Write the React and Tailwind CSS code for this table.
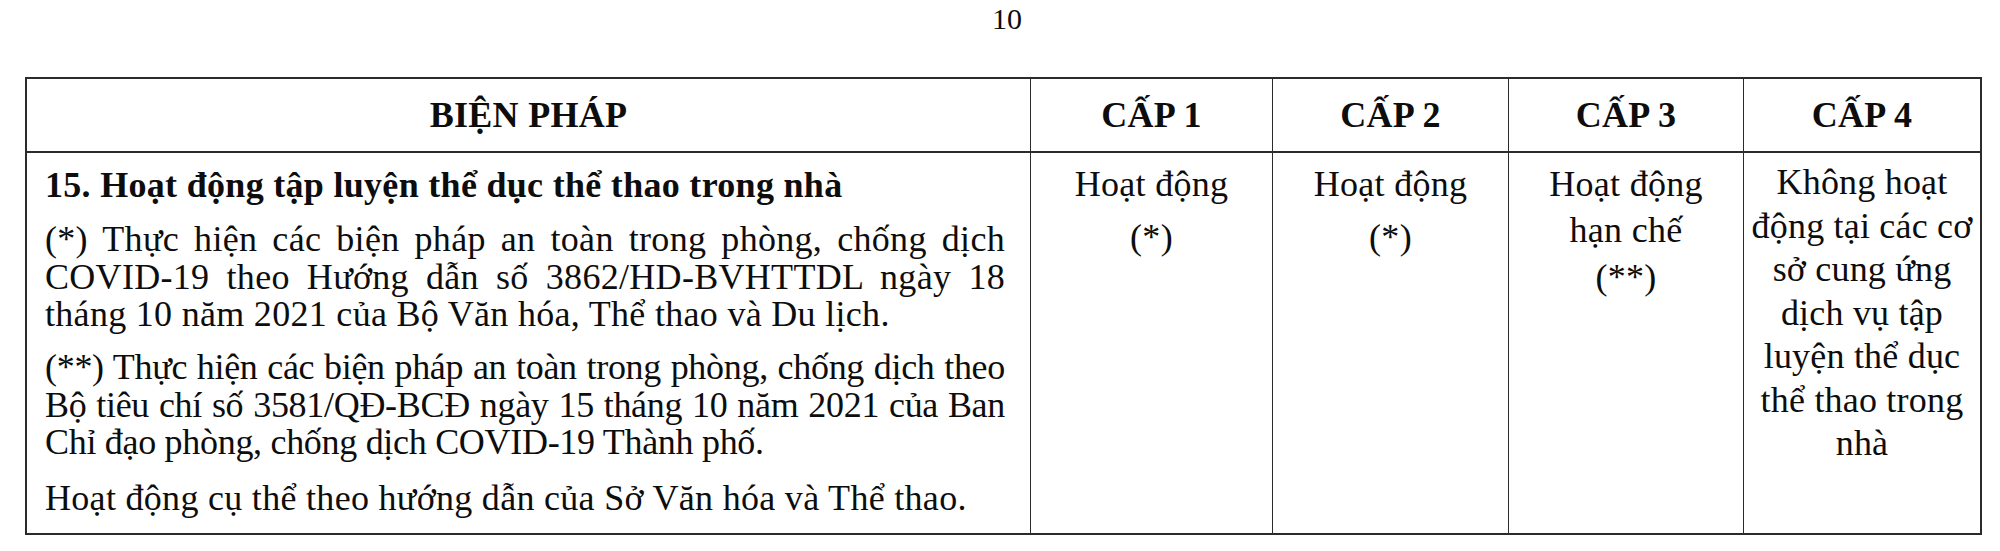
import React from 'react';

const p1 = [
    '(*) Thực hiện các biện pháp an toàn trong phòng, chống dịch',
    'COVID-19 theo Hướng dẫn số 3862/HD-BVHTTDL ngày 18',
    'tháng 10 năm 2021 của Bộ Văn hóa, Thể thao và Du lịch.',
];

const p2 = [
    '(**) Thực hiện các biện pháp an toàn trong phòng, chống dịch theo',
    'Bộ tiêu chí số 3581/QĐ-BCĐ ngày 15 tháng 10 năm 2021 của Ban',
    'Chỉ đạo phòng, chống dịch COVID-19 Thành phố.',
];

const levels = [
    { title: 'CẤP 1', lines: ['Hoạt động', '(*)'], cls: 'pt-[5px] leading-[53px]' },
    { title: 'CẤP 2', lines: ['Hoạt động', '(*)'], cls: 'pt-[5px] leading-[53px]' },
    { title: 'CẤP 3', lines: ['Hoạt động', 'hạn chế', '(**)'], cls: 'pt-[7.5px] leading-[46.5px]' },
];

const level4 = ['Không hoạt', 'động tại các cơ', 'sở cung ứng', 'dịch vụ tập', 'luyện thể dục', 'thể thao trong', 'nhà'];

// a paragraph whose lines break exactly where the scan breaks them
const Paragraph = ({ lines, tracking, className }) => (
    <div className={className}>
        {lines.map((line, i) => (
            <div
                key={i}
                className={
                    (i < lines.length - 1 ? 'text-justify [text-align-last:justify] ' : 'text-left ') +
                    'whitespace-nowrap ' + tracking
                }
            >
                {line}
            </div>
        ))}
    </div>
);

const App = () => {
    return (
        <div className="w-[2000px] h-[551px] bg-white text-[#0d0d0d] overflow-hidden font-['Liberation_Serif','Times_New_Roman',serif]">
            {/* số trang */}
            <div className="pt-[4px] pl-[14px] text-center text-[30px] leading-[30px]">10</div>

            {/* bảng */}
            <div className="mt-[43px] ml-[25px] w-[1957px] border-2 border-[#2b2b2b]">
                <div className="grid grid-cols-[1004px_242px_236px_235px_1fr] h-[74px] border-b-2 border-[#2b2b2b] text-[36px] font-bold tracking-[0.3px]">
                    <div className="flex items-center justify-center border-r-[1.5px] border-[#2b2b2b]">BIỆN PHÁP</div>
                    {levels.map(level => (
                        <div key={level.title} className="flex items-center justify-center border-r-[1.5px] border-[#2b2b2b]">{level.title}</div>
                    ))}
                    <div className="flex items-center justify-center">CẤP 4</div>
                </div>

                <div className="grid grid-cols-[1004px_242px_236px_235px_1fr] h-[380px] text-[36px]">
                    <div className="border-r-[1.5px] border-[#2b2b2b] pt-[14px] pl-[18px] pr-[25px] leading-[37.5px]">
                        <div className="font-bold tracking-[0.3px] whitespace-nowrap">
                            15. Hoạt động tập luyện thể dục thể thao trong nhà
                        </div>
                        <Paragraph lines={p1} tracking="tracking-[0.3px]" className="mt-[16.5px]" />
                        <Paragraph lines={p2} tracking="tracking-[-0.3px]" className="mt-[15.5px]" />
                        <div className="mt-[18.5px] tracking-[0.3px] whitespace-nowrap">
                            Hoạt động cụ thể theo hướng dẫn của Sở Văn hóa và Thể thao.
                        </div>
                    </div>

                    {levels.map(level => (
                        <div key={level.title} className={'border-r-[1.5px] border-[#2b2b2b] text-center tracking-[0.3px] ' + level.cls}>
                            {level.lines.map((l, i) => (
                                <div key={i} className="whitespace-nowrap">{l}</div>
                            ))}
                        </div>
                    ))}

                    <div className="pt-[8px] text-center leading-[43.5px] tracking-[0.2px]">
                        {level4.map((l, i) => (
                            <div key={i} className="whitespace-nowrap">{l}</div>
                        ))}
                    </div>
                </div>
            </div>
        </div>
    );
};

export default App;
